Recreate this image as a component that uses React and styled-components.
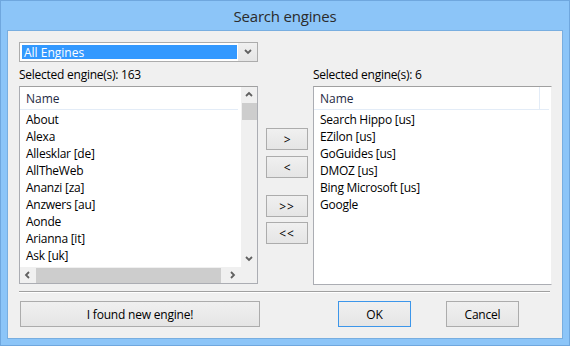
import React from "react";
import styled, { createGlobalStyle } from "styled-components";

const GlobalStyle = createGlobalStyle`
  html, body {
    margin: 0;
    padding: 0;
    background: #8dc5f7;
  }
  body {
    font-family: "Open Sans", "Noto Sans", sans-serif;
    font-size: 12px;
    color: #000;
  }
`;

const Frame = styled.div`
  width: 570px;
  height: 346px;
  box-sizing: border-box;
  background: #8cc5f8;
  border: 1px solid #6fa7de;
  padding: 0 6px 6px 6px;
  display: flex;
  flex-direction: column;
`;

const TitleBar = styled.div`
  height: 29px;
  display: flex;
  align-items: center;
  justify-content: center;
  font-size: 15px;
  color: #2b2b2b;
  letter-spacing: -0.2px;
`;

const Client = styled.div`
  flex: 1;
  background: #f0f0f0;
  border: 1px solid #78aee0;
  padding: 11px 10px 0 11px;
  display: flex;
  flex-direction: column;
`;

const Panels = styled.div`
  display: flex;
  align-items: flex-start;
`;

const Column = styled.div`
  width: 239px;
  display: flex;
  flex-direction: column;
`;

const Combo = styled.div`
  height: 20px;
  box-sizing: border-box;
  border: 1px solid #acacac;
  background: #fff;
  display: flex;
  padding: 2px 0 2px 2px;
`;

const ComboValue = styled.div`
  flex: 1;
  background: #3399ff;
  color: #fff;
  line-height: 15px;
  padding-left: 2px;
  margin-right: 1px;
`;

const ComboButton = styled.div`
  width: 19px;
  margin: -2px 0;
  background: linear-gradient(#f0f0f0, #e5e5e5);
  display: flex;
  align-items: center;
  justify-content: center;
`;

const Label = styled.div`
  height: 24px;
  line-height: 25px;
  letter-spacing: -0.25px;
  padding-top: ${(p) => (p.$spaced ? "20px" : "0")};
`;

const List = styled.div`
  height: ${(p) => p.$height}px;
  box-sizing: border-box;
  background: #fff;
  border: 1px solid #abadb3;
  border-top-color: #a0a0a0;
  border-right-color: ${(p) => (p.$open ? "#f0f0f0" : "#abadb3")};
  display: grid;
  grid-template-columns: 1fr ${(p) => (p.$scroll ? "16px" : "0")};
  grid-template-rows: 1fr ${(p) => (p.$scroll ? "16px" : "0")};
  overflow: hidden;
`;

const ListBody = styled.div`
  overflow: hidden;
`;

const Header = styled.div`
  height: 22px;
  display: flex;
  border-bottom: 1px solid #e3ecf7;
  margin-right: ${(p) => p.$inset}px;
  margin-bottom: 1px;
`;

const HeaderCell = styled.div`
  width: ${(p) => p.$width}px;
  padding-left: 6px;
  line-height: 23px;
  color: #1f2a44;
  border-right: ${(p) => (p.$divider ? "1px solid #e3ecf7" : "none")};
`;

const Row = styled.div`
  height: 17px;
  line-height: 17px;
  padding-left: 6px;
  white-space: nowrap;
  letter-spacing: -0.25px;
`;

const VScroll = styled.div`
  background: #f0f0f0;
  display: flex;
  flex-direction: column;
  align-items: center;
`;

const HScroll = styled.div`
  background: #f0f0f0;
  display: flex;
  align-items: center;
`;

const Corner = styled.div`
  background: #f0f0f0;
`;

const Arrow = styled.div`
  width: 16px;
  height: 16px;
  flex: none;
  display: flex;
  align-items: center;
  justify-content: center;
`;

const VThumb = styled.div`
  width: 15px;
  height: 17px;
  background: #cdcdcd;
`;

const VTrack = styled.div`
  flex: 1;
`;

const HThumb = styled.div`
  width: 185px;
  height: 15px;
  background: #cdcdcd;
`;

const HTrack = styled.div`
  flex: 1;
`;

const Middle = styled.div`
  width: 42px;
  margin: 0 5px 0 8px;
  padding-top: 86px;
  display: flex;
  flex-direction: column;
`;

const Button = styled.button`
  box-sizing: border-box;
  width: ${(p) => p.$width || 42}px;
  height: ${(p) => p.$height || 22}px;
  margin-top: ${(p) => p.$gap || 0}px;
  margin-left: ${(p) => p.$left || 0}px;
  padding: 0;
  border: 1px solid ${(p) => (p.$default ? "#3c96ea" : "#acacac")};
  background: linear-gradient(#f0f0f0, #e5e5e5);
  font-family: inherit;
  font-size: 12px;
  color: #000;
  letter-spacing: ${(p) => p.$spacing || "-0.2px"};
`;

const Separator = styled.div`
  height: 1px;
  background: #a0a0a0;
  margin: 6px 2px 0 0;
  box-shadow: 0 1px 0 #fff;
`;

const Footer = styled.div`
  display: flex;
  margin-top: 9px;
  padding-left: 1px;
`;

const Chevron = ({ dir }) => {
  const d = {
    up: "M1 5 L4 2 L7 5",
    down: "M1 2 L4 5 L7 2",
    left: "M5 1 L2 4 L5 7",
    right: "M2 1 L5 4 L2 7",
  }[dir];
  return (
    <svg width="8" height="8" viewBox="0 0 8 8">
      <path d={d} fill="none" stroke="#606060" strokeWidth="1.8" />
    </svg>
  );
};

const allEngines = [
  "About",
  "Alexa",
  "Allesklar [de]",
  "AllTheWeb",
  "Ananzi [za]",
  "Anzwers [au]",
  "Aonde",
  "Arianna [it]",
  "Ask [uk]",
];

const selected = [
  "Search Hippo [us]",
  "EZilon [us]",
  "GoGuides [us]",
  "DMOZ [us]",
  "Bing Microsoft [us]",
  "Google",
];

export default function App() {
  return (
    <>
      <GlobalStyle />
      <Frame>
        <TitleBar>Search engines</TitleBar>
        <Client>
          <Panels>
            <Column>
              <Combo>
                <ComboValue>All Engines</ComboValue>
                <ComboButton>
                  <Chevron dir="down" />
                </ComboButton>
              </Combo>
              <Label>Selected engine(s): 163</Label>
              <List $height={198} $scroll>
                <ListBody>
                  <Header $inset={3}>
                    <HeaderCell $width={220}>Name</HeaderCell>
                  </Header>
                  {allEngines.map((name) => (
                    <Row key={name}>{name}</Row>
                  ))}
                </ListBody>
                <VScroll>
                  <Arrow>
                    <Chevron dir="up" />
                  </Arrow>
                  <VThumb />
                  <VTrack />
                  <Arrow>
                    <Chevron dir="down" />
                  </Arrow>
                </VScroll>
                <HScroll>
                  <Arrow>
                    <Chevron dir="left" />
                  </Arrow>
                  <HThumb />
                  <HTrack />
                  <Arrow>
                    <Chevron dir="right" />
                  </Arrow>
                </HScroll>
                <Corner />
              </List>
            </Column>
            <Middle>
              <Button>&gt;</Button>
              <Button $gap={6}>&lt;</Button>
              <Button $gap={17} $spacing="1px">&gt;&gt;</Button>
              <Button $gap={5} $spacing="1px">&lt;&lt;</Button>
            </Middle>
            <Column>
              <Label $spaced>Selected engine(s): 6</Label>
              <List $height={199} $open>
                <ListBody>
                  <Header $inset={2}>
                    <HeaderCell $width={219} $divider>
                      Name
                    </HeaderCell>
                  </Header>
                  {selected.map((name) => (
                    <Row key={name}>{name}</Row>
                  ))}
                </ListBody>
              </List>
            </Column>
          </Panels>
          <Separator />
          <Footer>
            <Button $width={240} $height={26}>
              I found new engine!
            </Button>
            <Button $width={73} $height={26} $left={78} $default>
              OK
            </Button>
            <Button $width={73} $height={26} $left={35}>
              Cancel
            </Button>
          </Footer>
        </Client>
      </Frame>
    </>
  );
}
